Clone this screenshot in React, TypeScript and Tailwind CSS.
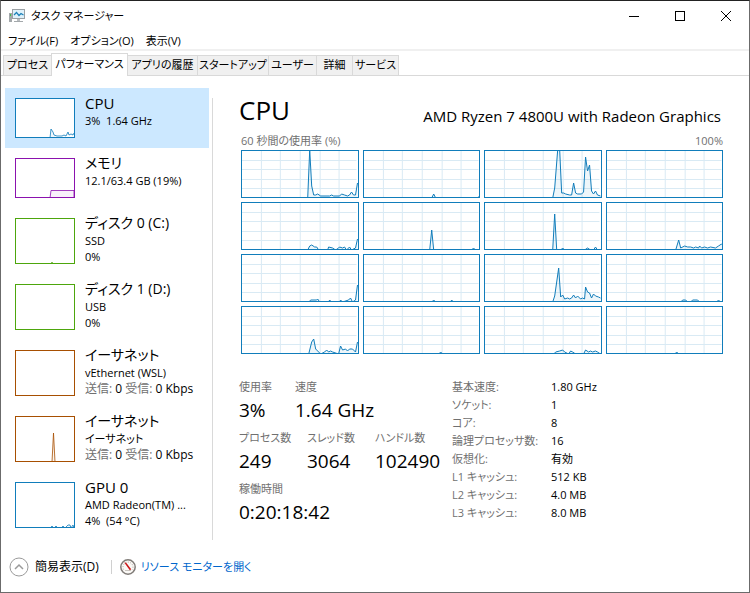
import { ReactNode } from "react";

const menus = ["ファイル(F)", "オプション(O)", "表示(V)"];

const tabs = [
  { label: "プロセス", width: "w-12" },
  { label: "パフォーマンス", width: "w-[77px]" },
  { label: "アプリの履歴", width: "w-[70px]" },
  { label: "スタートアップ", width: "w-[71px]" },
  { label: "ユーザー", width: "w-12" },
  { label: "詳細", width: "w-9" },
  { label: "サービス", width: "w-[46px]" },
];

// Usage history per logical processor, in a 117 x 47 box (48 is idle)
const cores = [
  "67,48 69,0 71,36 73,45 75,45 77,44 80,46 89,46 91,45 93,46 99,46 101,44 104,45 107,46 109,45 111,42 113,45 115,45 117,33",
  "69,48 71,44 73,48 115,48 117,46",
  "69,48 71,38 74,0 76,0 78,43 80,43 82,44 86,45 88,45 90,33 92,43 94,44 98,44 100,42 102,7 104,21 106,15 108,41 110,44 112,41 114,45 117,46",
  "",
  "67,48 69,44 71,43 74,45 76,45 78,48 87,48 88,45 92,46 95,48 98,46 99,45 102,46 104,45 106,48 109,45 111,48 115,46 117,37",
  "67,48 69,28 71,48 109,48 111,46 113,48",
  "69,48 71,12 73,48 77,48 79,46 81,48 101,48 104,46 107,48 110,48 112,45 114,48",
  "70,48 73,38 75,46 79,44 82,45 85,45 88,46 90,45 93,46 94,44 96,46 99,45 102,46 105,45 110,46 113,44 116,42 117,43",
  "68,48 70,46 76,46 77,45 79,48 88,48 89,46 91,48 99,48 100,46 102,48 108,46 110,44 112,48 115,46 117,31",
  "69,48 71,46 73,48 88,48 89,46 91,48",
  "69,48 71,42 75,14 77,43 79,41 81,45 84,44 86,45 88,44 90,41 92,44 94,42 97,45 99,44 101,45 102,33 104,38 106,39 108,44 110,40 112,42 115,43 117,44",
  "75,48 77,46 80,46 82,48 85,48 87,46 92,46 94,48 111,48 113,46 115,48",
  "68,48 71,36 73,33 75,43 77,45 80,48 84,46 86,44 88,46 90,45 92,46 98,48 100,40 102,44 105,43 107,45 109,43 112,43 115,46 117,36",
  "76,48 78,46 80,48",
  "70,48 72,46 76,45 79,44 81,46 85,48 87,45 89,46 92,48 100,48 102,44 105,46 107,45 109,46 112,45 114,46 117,48",
  "69,48 71,46 73,48",
];

type Device = {
  name: string;
  lines: ReactNode[];
  lineSize?: string;
  color: string;
  points: string;
  height: string;
  active?: boolean;
};

function Net() {
  return (
    <span className="text-[12px]">
      <span className="text-[#707070]">送信:</span> 0{" "}
      <span className="text-[#707070]">受信:</span> 0 Kbps
    </span>
  );
}

const devices: Device[] = [
  {
    name: "CPU",
    lines: ["3%\u00a0 1.64 GHz"],
    color: "#117dbb",
    points: "35,40 36,31 38,34 39,37 42,38 47,38 49,37 51,38 53,34 54,37 56,36 58,37 59,35",
    height: "h-10",
    active: true,
  },
  {
    name: "メモリ",
    lines: ["12.1/63.4 GB (19%)"],
    color: "#8b12ae",
    points: "35,40 36,32.5 59,32.5 59,40",
    height: "h-10",
  },
  {
    name: "ディスク 0 (C:)",
    lines: ["SSD", "0%"],
    color: "#4da60c",
    points: "36,46 37,44 38,46",
    height: "h-[46px]",
  },
  {
    name: "ディスク 1 (D:)",
    lines: ["USB", "0%"],
    color: "#4da60c",
    points: "",
    height: "h-[46px]",
  },
  {
    name: "イーサネット",
    lines: ["vEthernet (WSL)", <Net />],
    color: "#a74f01",
    points: "",
    height: "h-[46px]",
  },
  {
    name: "イーサネット",
    lines: ["イーサネット", <Net />],
    color: "#a74f01",
    points: "37,46 38.5,17 40,46",
    height: "h-[46px]",
  },
  {
    name: "GPU 0",
    lines: ["AMD Radeon(TM) ...", "4%\u00a0 (54 °C)"],
    color: "#117dbb",
    points: "35,46 37,44 39,46 41,44 43,46 46,46 48,44 50,46 53,43 55,43 56,46 58,43 59,46",
    height: "h-[46px]",
  },
];

const stats = [
  [
    ["使用率", "3%"],
    ["速度", "1.64 GHz"],
  ],
  [
    ["プロセス数", "249"],
    ["スレッド数", "3064"],
    ["ハンドル数", "102490"],
  ],
  [["稼働時間", "0:20:18:42"]],
];

const specs = [
  ["基本速度:", "1.80 GHz"],
  ["ソケット:", "1"],
  ["コア:", "8"],
  ["論理プロセッサ数:", "16"],
  ["仮想化:", "有効"],
  ["L1 キャッシュ:", "512 KB"],
  ["L2 キャッシュ:", "4.0 MB"],
  ["L3 キャッシュ:", "8.0 MB"],
];

function Thumb({ device }: { device: Device }) {
  const h = device.height === "h-10" ? 40 : 46;
  return (
    <svg
      className={`w-[60px] shrink-0 bg-white ${device.height}`}
      viewBox={`0 0 60 ${h}`}
      fill="none"
      stroke={device.color}
    >
      <polyline points={device.points} fill={device.color} fillOpacity="0.06" strokeOpacity="0.8" />
      <rect x="0.5" y="0.5" width="59" height={h - 1} />
    </svg>
  );
}

function CoreChart({ points }: { points: string }) {
  return (
    <div className="h-12 border border-[#117dbb]">
      <svg className="block h-full w-full" viewBox="1 1 116 46" preserveAspectRatio="none" fill="none">
        <g stroke="#d9eaf4" shapeRendering="crispEdges">
          {[20.5, 39.5, 59.5, 79.5, 98.5].map((x) => (
            <line key={x} x1={x} x2={x} y1="1" y2="47" vectorEffect="non-scaling-stroke" />
          ))}
          {[10.5, 19.5, 29.5, 38.5].map((y) => (
            <line key={y} x1="1" x2="116" y1={y} y2={y} vectorEffect="non-scaling-stroke" />
          ))}
        </g>
        {points && (
          <>
            <polygon points={`${points} 117,48`} fill="#117dbb" fillOpacity="0.07" />
            <polyline points={points} stroke="#117dbb" vectorEffect="non-scaling-stroke" />
          </>
        )}
      </svg>
    </div>
  );
}

function AppIcon() {
  return (
    <svg className="h-4 w-4" viewBox="0 0 16 16" fill="none">
      <rect x="0" y="5" width="3" height="9" fill="#a3a8ab" />
      <rect x="1" y="6" width="1" height="2" fill="#3fbf4a" />
      <rect x="3.500" y="1.500" width="12" height="9" fill="#dff1fa" stroke="#9aa0a4" />
      <path d="M5 7 L7.500 4.500 L10 7.500 L12 5.500 L14.500 7" stroke="#1a80b8" strokeWidth="1.200" />
      <rect x="8" y="11" width="3" height="2" fill="#b9bdc0" />
      <rect x="5" y="13" width="9" height="1" fill="#a3a8ab" />
    </svg>
  );
}

function GaugeIcon() {
  return (
    <svg className="h-4 w-4" viewBox="0 0 16 16" fill="none">
      <circle cx="8" cy="8" r="7.200" fill="#fbf9f6" stroke="#807c78" strokeWidth="1.500" />
      <path d="M3.600 10.500 A5 5 0 1 1 12.400 10.500" stroke="#a8a39d" strokeDasharray="1 1.500" />
      <path d="M5 11.500 H11" stroke="#c9c5c0" />
      <path d="M4.200 3.600 L6.200 3.800 L11.200 10.200 L9.800 11.200 Z" fill="#cc1417" />
    </svg>
  );
}

export default function App() {
  return (
    <div className="flex min-h-screen flex-col whitespace-nowrap border border-[#6b6b6b] border-t-[#222] bg-white font-['Open_Sans','Noto_Sans_CJK_JP',sans-serif] text-[11px] text-black [font-feature-settings:'palt']">
      {/* Title bar */}
      <header className="flex h-[30px] items-center pl-2">
        <AppIcon />
        <h1 className="ml-[6px] flex-1">タスク マネージャー</h1>
        <button className="flex h-full w-[46px] items-center justify-center" aria-label="最小化">
          <svg className="h-[10px] w-[10px]" viewBox="0 0 10 10" stroke="#000">
            <path d="M0 5.500 H10" />
          </svg>
        </button>
        <button className="flex h-full w-[46px] items-center justify-center" aria-label="最大化">
          <svg className="h-[10px] w-[10px]" viewBox="0 0 10 10" stroke="#000" fill="none">
            <rect x="0.5" y="0.5" width="9" height="9" />
          </svg>
        </button>
        <button className="flex h-full w-[46px] items-center justify-center" aria-label="閉じる">
          <svg className="h-[10px] w-[10px]" viewBox="0 0 10 10" stroke="#000">
            <path d="M0 0 L10 10 M10 0 L0 10" />
          </svg>
        </button>
      </header>

      {/* Menu */}
      <nav className="flex h-5 items-center gap-3 border-b-2 border-[#f0f0f0] pl-[7px] pt-[2px]">
        {menus.map((m) => (
          <button key={m}>{m}</button>
        ))}
      </nav>

      {/* Tabs */}
      <div role="tablist" className="flex h-[25px] items-end border-b border-[#d9d9d9] pl-[2px]">
        {tabs.map((t, i) => (
          <button
            key={t.label}
            role="tab"
            aria-selected={i === 1}
            className={`border border-b-0 border-[#d9d9d9] ${t.width} ${
              i === 1 ? "-mb-px h-[23px] bg-white pb-[2px]" : "h-5 border-l-0 bg-[#f0f0f0] first:border-l first:border-r-0"
            }`}
          >
            {t.label}
          </button>
        ))}
      </div>

      <div className="flex flex-1 pt-3">
        {/* Device list */}
        <aside className="ml-1 w-[204px] shrink-0">
          {devices.map((d, i) => (
            <button
              key={i}
              className={`flex w-full gap-[10px] px-[10px] text-left ${d.active ? "bg-[#cce8ff]" : ""}`}
            >
              <span className="py-[10px]">
                <Thumb device={d} />
              </span>
              <span className="block min-w-0 pt-[5px]">
                <span className={`block leading-5 ${d.name.endsWith("U") || d.name.startsWith("G") ? "text-[15px]" : "text-[14px]"}`}>
                  {d.name}
                </span>
                {d.lines.map((line, j) => (
                  <span key={j} className="block h-4 leading-4">
                    {line}
                  </span>
                ))}
              </span>
            </button>
          ))}
        </aside>
        <div className="ml-[3px] mt-[10px] w-px bg-[#d9d9d9]" />

        {/* CPU details */}
        <main className="min-w-0 flex-1 px-[26px]">
          <div className="flex h-11 items-center justify-between pr-[2px]">
            <h2 className="text-[26px] leading-[44px]">CPU</h2>
            <p className="pt-3 text-[15px] leading-5">AMD Ryzen 7 4800U with Radeon Graphics</p>
          </div>
          <div className="flex h-[18px] items-center justify-between pl-[2px] text-[#707070]">
            <span>60 秒間の使用率 (%)</span>
            <span>100%</span>
          </div>
          <div className="ml-[2px] grid grid-cols-4 gap-1">
            {cores.map((points, i) => (
              <CoreChart key={i} points={points} />
            ))}
          </div>

          <div className="flex pt-6">
            <div className="flex w-[213px] shrink-0 flex-col gap-[5px]">
              {stats.map((row, i) => (
                <dl key={i} className="flex">
                  {row.map(([label, value]) => (
                    <div key={label} className={i === 0 ? "w-14" : "w-[68px]"}>
                      <dt className="leading-[18px] text-[#707070]">{label}</dt>
                      <dd className="text-[19px] leading-7">{value}</dd>
                    </div>
                  ))}
                </dl>
              ))}
            </div>
            <table className="self-start">
              <tbody>
                {specs.map(([label, value]) => (
                  <tr key={label} className="h-[18px] leading-[18px]">
                    <th className="w-[99px] p-0 text-left font-normal text-[#707070]">{label}</th>
                    <td className="p-0">{value}</td>
                  </tr>
                ))}
              </tbody>
            </table>
          </div>
        </main>
      </div>

      {/* Footer */}
      <footer className="flex h-[52px] items-center pl-2 pt-[2px]">
        <button className="flex items-center gap-[6px] text-[12px]">
          <svg className="h-5 w-5" viewBox="0 0 20 20" fill="none">
            <circle cx="10" cy="10" r="9" stroke="#9a9a9a" />
            <path d="M6 12 L10 8 L14 12" stroke="#9a9a9a" strokeWidth="1.500" />
          </svg>
          簡易表示(D)
        </button>
        <span className="ml-3 mr-2 h-[14px] w-px bg-[#d0d0d0]" />
        <a href="#" className="flex items-center gap-[5px] text-[#0066cc]">
          <GaugeIcon />
          リソース モニターを開く
        </a>
      </footer>
    </div>
  );
}
